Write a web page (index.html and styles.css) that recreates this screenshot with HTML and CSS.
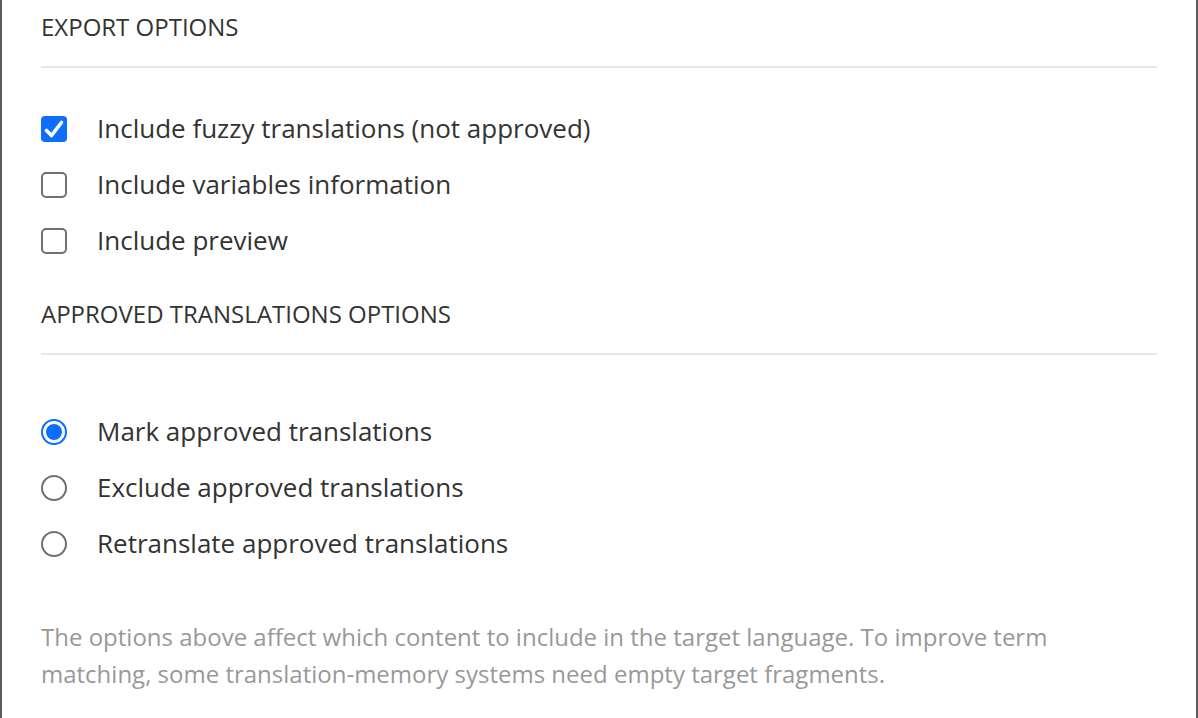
FILE: index.html
```html
<!DOCTYPE html>
<html lang="en">
<head>
<meta charset="utf-8">
<title>Export options</title>
<link rel="stylesheet" href="styles.css">
</head>
<body>
<div class="panel">
  <h2 class="section-title">EXPORT OPTIONS</h2>
  <ul class="options options-first">
    <li class="option">
      <span class="checkbox checked">
        <svg viewBox="0 0 26 26" width="26" height="26"><path d="M5.5 14.5 L10.5 19.5 L20.5 6.5" fill="none" stroke="#fff" stroke-width="3.6" stroke-linecap="round" stroke-linejoin="round"/></svg>
      </span>
      <span class="label">Include fuzzy translations (not approved)</span>
    </li>
    <li class="option">
      <span class="checkbox"></span>
      <span class="label">Include variables information</span>
    </li>
    <li class="option">
      <span class="checkbox"></span>
      <span class="label">Include preview</span>
    </li>
  </ul>
  <h2 class="section-title section-title-second">APPROVED TRANSLATIONS OPTIONS</h2>
  <ul class="options options-radios">
    <li class="option">
      <span class="radio checked"><span class="dot"></span></span>
      <span class="label">Mark approved translations</span>
    </li>
    <li class="option">
      <span class="radio"></span>
      <span class="label">Exclude approved translations</span>
    </li>
    <li class="option">
      <span class="radio"></span>
      <span class="label">Retranslate approved translations</span>
    </li>
  </ul>
  <p class="note">The options above affect which content to include in the target language. To improve term matching, some translation-memory systems need empty target fragments.</p>
</div>
</body>
</html>
```
FILE: styles.css
```css
html, body {
  margin: 0;
  padding: 0;
  background: #fff;
}

body {
  font-family: "Open Sans", "Liberation Sans", sans-serif;
  color: #333;
}

.panel {
  box-sizing: border-box;
  width: 1198px;
  height: 718px;
  border-left: 2px solid #5c5c5c;
  border-right: 2px solid #5c5c5c;
  padding: 0 39px;
  overflow: hidden;
}

.section-title {
  margin: 0;
  padding: 10px 0 22px;
  font-size: 24px;
  line-height: 34px;
  font-weight: 400;
  color: #333;
  border-bottom: 2px solid #e6e6e6;
}

.section-title-second {
  margin-top: 18px;
}

.options {
  list-style: none;
  margin: 0;
  padding: 0;
}

.options-first {
  margin-top: 33px;
}

.options-radios {
  margin-top: 49px;
}

.option {
  display: flex;
  align-items: center;
  height: 56px;
}

.label {
  margin-left: 30px;
  padding-bottom: 2px;
  font-size: 26px;
  line-height: 36px;
  color: #333;
}

.checkbox {
  box-sizing: border-box;
  flex: none;
  width: 26px;
  height: 26px;
  border: 2px solid #707070;
  border-radius: 5px;
  background: #fff;
}

.checkbox.checked {
  border: none;
  background: #0c6efd;
  border-radius: 4px;
}

.checkbox svg {
  display: block;
}

.radio {
  box-sizing: border-box;
  flex: none;
  width: 26px;
  height: 26px;
  border: 2px solid #707070;
  border-radius: 50%;
  display: flex;
  align-items: center;
  justify-content: center;
}

.radio.checked {
  border-color: #0c6efd;
}

.radio .dot {
  width: 16px;
  height: 16px;
  border-radius: 50%;
  background: #0c6efd;
}

.note {
  margin: 46px 0 0;
  font-size: 24px;
  line-height: 37px;
  color: #999;
}
```
